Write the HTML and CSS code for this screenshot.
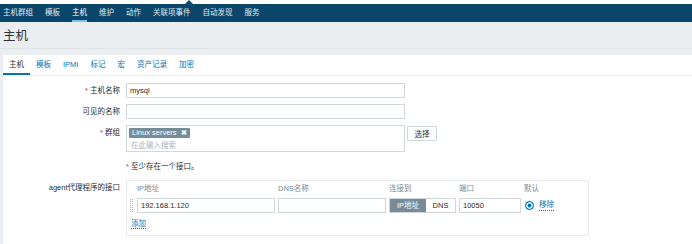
FILE: index.html
```html
<!DOCTYPE html>
<html lang="zh-CN">
<head>
    <meta charset="UTF-8">
    <meta name="viewport" content="width=device-width, initial-scale=1.0">
    <title>主机</title>
    <link rel="stylesheet" href="styles.css">
</head>
<body>
    <div class="top-bar">
        <nav class="main-nav">
            <a href="#">主机群组</a>
            <a href="#">模板</a>
            <a href="#" class="active">主机</a>
            <a href="#">维护</a>
            <a href="#">动作</a>
            <a href="#">关联项事件</a>
            <a href="#">自动发现</a>
            <a href="#">服务</a>
        </nav>
    </div>

    <h1 class="page-title">主机</h1>

    <div class="panel">
        <div class="tabs">
            <a href="#" class="active">主机</a>
            <a href="#">模板</a>
            <a href="#">IPMI</a>
            <a href="#">标记</a>
            <a href="#">宏</a>
            <a href="#">资产记录</a>
            <a href="#">加密</a>
        </div>

        <form class="host-form">
            <label class="form-label required" for="host">主机名称</label>
            <div class="form-field">
                <input type="text" id="host" class="text-input" value="mysql">
            </div>

            <label class="form-label" for="visible">可见的名称</label>
            <div class="form-field">
                <input type="text" id="visible" class="text-input">
            </div>

            <label class="form-label required">群组</label>
            <div class="form-field group-field">
                <div class="multiselect">
                    <div class="tags">
                        <span class="tag">Linux servers <b>✖</b></span>
                    </div>
                    <div class="placeholder">在此输入搜索</div>
                </div>
                <button type="button" class="select-btn">选择</button>
            </div>

            <div class="form-label"></div>
            <div class="form-field notice"><span class="star">*</span> 至少存在一个接口。</div>

            <div class="form-label tall">agent代理程序的接口</div>
            <div class="form-field">
                <div class="iface-box">
                    <div class="iface-grid">
                        <span></span>
                        <span class="col-head">IP地址</span>
                        <span class="col-head">DNS名称</span>
                        <span class="col-head">连接到</span>
                        <span class="col-head">端口</span>
                        <span class="col-head">默认</span>

                        <span class="drag-handle"></span>
                        <input type="text" class="text-input" value="192.168.1.120">
                        <input type="text" class="text-input">
                        <div class="toggle">
                            <span class="on">IP地址</span>
                            <span>DNS</span>
                        </div>
                        <input type="text" class="text-input" value="10050">
                        <div class="default-cell">
                            <span class="radio"></span>
                            <a href="#" class="link">移除</a>
                        </div>
                    </div>
                    <div class="add-row"><a href="#" class="link">添加</a></div>
                </div>
                <div class="iface-box next"></div>
            </div>
        </form>
    </div>
</body>
</html>
```

FILE: styles.css
```css
html, body {
    height: 100%;
    overflow: hidden;
}
body {
    display: flex;
    flex-direction: column;
    margin: 0;
    font-family: "Liberation Sans", "Noto Sans CJK SC", sans-serif;
    font-size: 7.5px;
    color: #1f2c33;
    background-color: #ebeef0;
}
a {
    text-decoration: none;
}

.top-bar {
    padding-top: 4px;
    background-color: #fff;
}
.main-nav {
    position: relative;
    display: flex;
    gap: 12px;
    height: 18px;
    padding-left: 3px;
    background-color: #0a466a;
}
.main-nav::before {
    content: "";
    position: absolute;
    left: 185px;
    top: -4px;
    border-left: 4px solid transparent;
    border-right: 4px solid transparent;
    border-bottom: 4px solid #0a466a;
}
.main-nav a {
    padding-top: 1px;
    line-height: 15px;
    color: #e2e9ee;
    border-bottom: 2px solid transparent;
}
.main-nav a.active {
    color: #fff;
    border-bottom-color: #78c2f2;
}

.page-title {
    flex: none;
    margin: 0 0 6px;
    padding: 3px 3px 0;
    height: 23px;
    line-height: 23px;
    font-size: 12.5px;
    font-weight: normal;
    color: #2b363c;
    border-bottom: 1px solid #dde2e5;
}

.panel {
    flex: 1;
    min-height: 0;
    margin-left: 3px;
    overflow: hidden;
    background-color: #fff;
}
.tabs {
    display: flex;
    border-bottom: 1px solid #ebeef0;
}
.tabs a {
    padding: 1px 6px 0;
    line-height: 17px;
    color: #0275b8;
    border-bottom: 2px solid transparent;
}
.tabs a.active {
    color: #1f2c33;
    border-bottom-color: #0275b8;
}

.host-form {
    display: grid;
    grid-template-columns: 117px 1fr;
    column-gap: 6px;
    row-gap: 6px;
    padding-top: 7px;
}
.form-label {
    text-align: right;
    line-height: 15px;
}
.form-label.tall {
    padding-top: 2px;
    line-height: 12px;
}
.required::before,
.star {
    color: #e33734;
}
.required::before {
    content: "* ";
}
.form-field {
    min-height: 15px;
}
.text-input {
    box-sizing: border-box;
    display: block;
    width: 279px;
    height: 15px;
    margin: 0;
    padding: 0 3px;
    border: 1px solid #d0d8dc;
    border-radius: 0;
    font-family: inherit;
    font-size: 7.5px;
    color: #1f2c33;
    background: #fff;
    outline: none;
}

.group-field {
    display: flex;
    align-items: flex-start;
    gap: 2px;
}
.multiselect {
    box-sizing: border-box;
    width: 279px;
    height: 27px;
    padding: 2px 2px 0;
    border: 1px solid #d0d8dc;
}
.tags {
    display: flex;
    height: 10px;
}
.tag {
    padding: 0 3px;
    line-height: 10px;
    color: #fff;
    background-color: #768d99;
    border-radius: 1px;
}
.tag b {
    margin-left: 2px;
    font-size: 7px;
}
.placeholder {
    padding-left: 2px;
    margin-top: 2px;
    line-height: 11px;
    color: #a7b4bb;
}
.select-btn {
    box-sizing: border-box;
    width: 30px;
    height: 15px;
    margin-top: 1px;
    padding: 0;
    border: 1px solid #d0d8dc;
    border-radius: 1px;
    font-family: inherit;
    font-size: 7.5px;
    color: #1f2c33;
    background: #fff;
}

.notice {
    padding-top: 1px;
    line-height: 15px;
}

.iface-box {
    box-sizing: border-box;
    width: 463px;
    padding: 2px 3px 5px;
    border: 1px solid #e6eaec;
}
.iface-box.next {
    height: 20px;
    margin-top: 8px;
}
.iface-grid {
    display: grid;
    grid-template-columns: 4px 138px 108px 67px 62px auto;
    column-gap: 3px;
    row-gap: 3px;
    align-items: center;
}
.iface-grid .text-input {
    width: 100%;
}
.col-head {
    line-height: 12px;
    color: #7a8a93;
}
.drag-handle {
    box-sizing: border-box;
    width: 3px;
    height: 13px;
    border-left: 1px dotted #a7b4bb;
    border-right: 1px dotted #a7b4bb;
}
.toggle {
    display: flex;
    box-sizing: border-box;
    height: 15px;
    border: 1px solid #d0d8dc;
}
.toggle span {
    flex: 1;
    line-height: 13px;
    text-align: center;
}
.toggle span.on {
    flex: 0 0 36px;
    color: #fff;
    background-color: #768d99;
}
.default-cell {
    display: flex;
    align-items: center;
    gap: 5px;
    padding-left: 1px;
}
.radio {
    box-sizing: border-box;
    width: 9px;
    height: 9px;
    border: 1px solid #0275b8;
    border-radius: 50%;
    background-color: #0275b8;
    box-shadow: inset 0 0 0 1.5px #fff;
}
.link {
    color: #0275b8;
    border-bottom: 1px dotted #0275b8;
    line-height: 10px;
}
.add-row {
    padding: 5px 0 0 1px;
    line-height: 12px;
}
```
